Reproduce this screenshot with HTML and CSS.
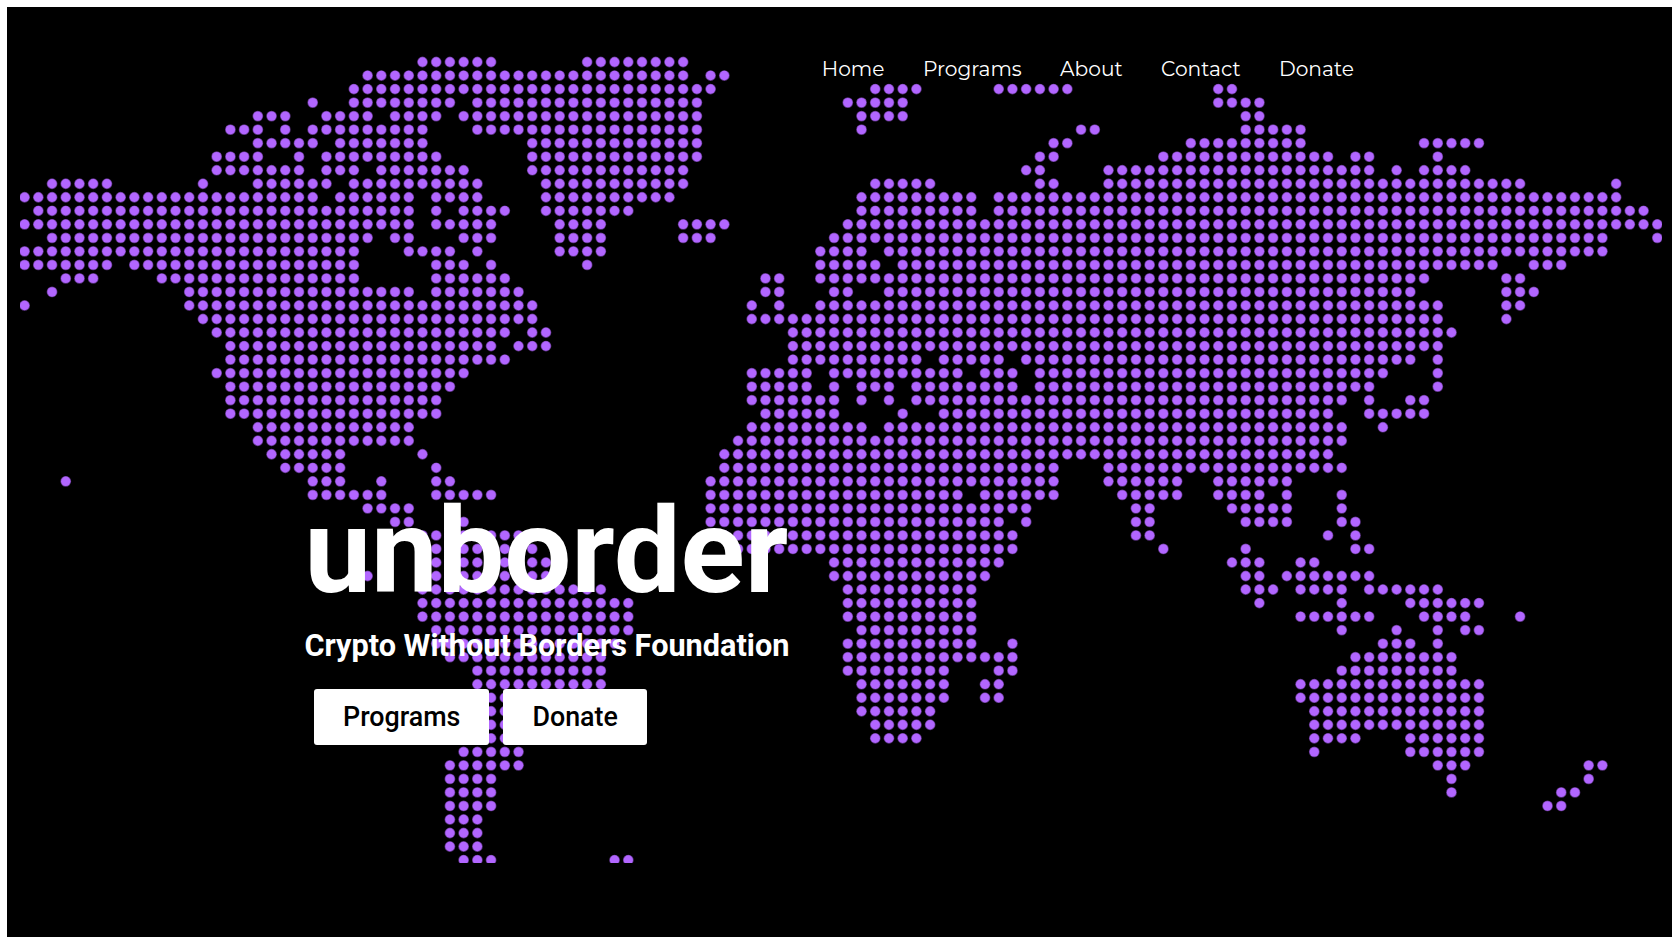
FILE: index.html
```html
<!DOCTYPE html>
<html lang="en">
<head>
<meta charset="utf-8">
<title>unborder</title>
<link rel="stylesheet" href="styles.css">
</head>
<body>
<main class="hero">
  <svg class="map" viewBox="0 0 1642 809" aria-hidden="true"></svg>
  <nav class="nav">
    <a class="nav-link" href="#">Home</a>
    <a class="nav-link" href="#">Programs</a>
    <a class="nav-link" href="#">About</a>
    <a class="nav-link" href="#">Contact</a>
    <a class="nav-link" href="#">Donate</a>
  </nav>
  <section class="intro">
    <h1 class="title">unborder</h1>
    <h2 class="subtitle">Crypto Without Borders Foundation</h2>
    <div class="actions">
      <a class="button" href="#">Programs</a>
      <a class="button" href="#">Donate</a>
    </div>
  </section>
</main>
<script src="map.js"></script>
</body>
</html>
```
FILE: styles.css
```css
* { box-sizing: border-box; }

body {
  margin: 0;
  height: 944px;
  padding: 7px;
  background: #fff;
  font-family: Roboto, sans-serif;
  overflow: hidden;
}

.hero {
  position: relative;
  height: 930px;
  background: #000;
  overflow: hidden;
}

/* The dotted map lies behind the navigation and the heading. */
.map {
  position: absolute;
  left: 13px;
  top: 47px;
  width: 1642px;
  height: 809px;
  fill: #b266ff;
  stroke: #b266ff;
  stroke-width: 1.4px;
  stroke-opacity: 0.5;
}

.nav {
  position: relative;
  display: flex;
  gap: 38.4px;
  padding: 49px 0 0 814.8px;
  height: 80px;
  line-height: 26px;
}

.nav-link {
  color: #fff;
  font-family: Montserrat, Inter, sans-serif;
  font-size: 20.2px;
  text-decoration: none;
  white-space: nowrap;
}

.intro {
  position: relative;
  padding: 395px 0 0 297.5px;
}

.title {
  margin: 0;
  font-size: 119px;
  font-weight: 700;
  line-height: 140px;
  letter-spacing: -0.15px;
}

.title, .subtitle { color: #fff; white-space: nowrap; }

.subtitle {
  margin: 0;
  padding-top: 6px;
  font-size: 30.65px;
  font-weight: 700;
  line-height: 36px;
}

.actions {
  display: flex;
  gap: 14px;
  padding: 25px 0 0 9.5px;
}

.button {
  height: 56px;
  padding: 0 29px;
  border-radius: 3px;
  background: #fff;
  color: #000;
  font-size: 26.85px;
  font-weight: 500;
  line-height: 56px;
  text-decoration: none;
}
```
FILE: map.js
```js
// Filled column ranges of the world map, one string per row of dots.
const rows = [
  "29-34 41-48",
  "25-48 50-51",
  "24-50 62-65 71-76 87-88",
  "21 24-31 33-49 60-64 87-90",
  "17-19 22-25 27-30 32-49 61-64 89-90",
  "15-17 19 21-29 33-49 61 77-78 89-93",
  "17-21 23-29 37-49 75-76 85-93 102-106",
  "14-17 20 22-30 37-49 74-75 83-95 97-98 103",
  "14-20 22-24 26-32 37-48 73-74 79-98 100 102-105",
  "2-6 13 17-22 24-33 38-48 62-66 74-75 79-109 116",
  "0-21 23-28 30-33 38-47 61-69 71-116",
  "1-28 30 32-35 38-44 61-69 71-118",
  "0-28 30-34 39-42 48-51 60-119",
  "2-25 27-28 32-34 39-42 48-50 59-115 119",
  "0-24 28-31 33 39-42 58-61 63-115",
  "0-6 8-24 30-32 34 41 58-62 64-107 110-112",
  "3-5 10-24 30-35 54-55 58-102 108-109",
  "2 12-28 30-36 54-55 59-60 63-101 108-110",
  "0 12-37 53 55 58-103 108-109",
  "13-37 53-103 108",
  "14-35 37-38 56-104",
  "15-34 36-38 56-103",
  "15-35 56-65 67-71 73-101 103",
  "14-32 53-57 59-68 70-72 74-99 103",
  "15-31 53-57 59 61-63 65-72 74-98 103",
  "15-30 53-59 61 63 65-96 98 101-102",
  "15-30 54-59 64 67-95 98-102",
  "17-28 53-61 63-96 99",
  "17-28 52-96",
  "18-23 29 51-95",
  "19-23 30 51-75 79-96",
  "3 21-23 26 30-31 50-75 79-84 87-92",
  "21-26 30-34 50-68 70-75 80-84 87-90 92 96",
  "25-28 50-73 81-82 88-92 96",
  "27-28 32 50-71 73 81-82 89-92 96-97",
  "29-36 50-72 81-82 95 97",
  "29-37 52-72 83 89 97-98",
  "29-38 59-71 88-90 93-94",
  "25 29-38 59-70 89-90 92-98",
  "29-42 60-69 89-91 93-96 98-103",
  "29-44 60-69 90 96 101-106",
  "29-44 60-69 93-98 102-105 109",
  "30-44 61-69 96 100 103 105-106",
  "30-43 60-69 72 99-101 103",
  "31-42 60-72 97-104",
  "33-42 60-67 71-72 96-104",
  "33-42 61-67 70-71 93-106",
  "33-40 61-67 70-71 93-106",
  "33-39 61-66 94-106",
  "33-38 62-66 94-106",
  "33-36 62-65 94-97 101-106",
  "32-36 94 101-106",
  "31-36 103-105 114-115",
  "31-34 104 114",
  "31-34 104 112-113",
  "31-34 111-112",
  "31-33",
  "31-33",
  "31-33",
  "32-34 43-44"
];

const map = document.querySelector(".map");
rows.forEach((row, r) => {
  row.split(" ").forEach((range) => {
    const [from, to = from] = range.split("-").map(Number);
    for (let c = from; c <= to; c++) {
      const dot = document.createElementNS("http://www.w3.org/2000/svg", "circle");
      dot.setAttribute("cx", (4.6 + c * 13.72).toFixed(2));
      dot.setAttribute("cy", (8 + r * 13.526).toFixed(2));
      dot.setAttribute("r", "4.7");
      map.appendChild(dot);
    }
  });
});
```
